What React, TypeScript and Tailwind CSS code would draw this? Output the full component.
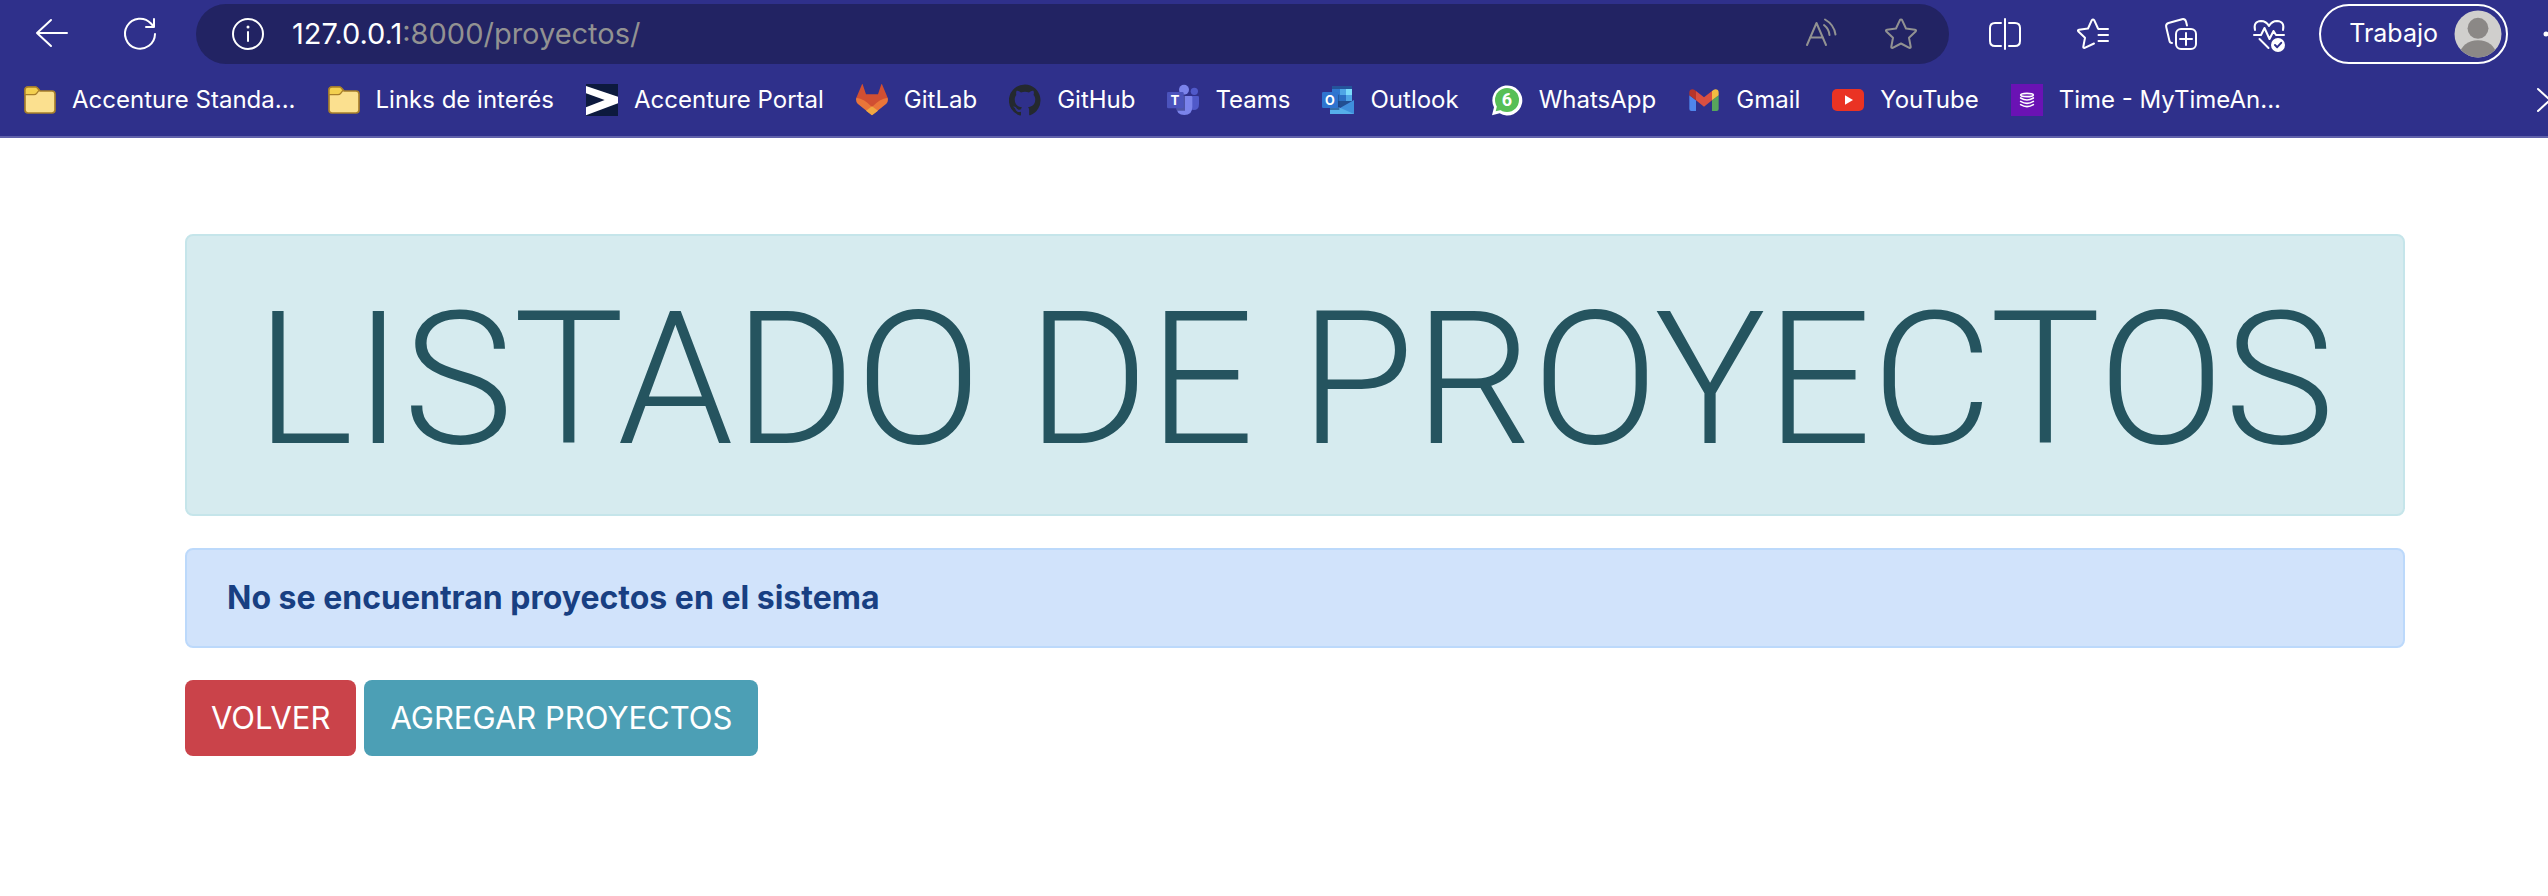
import type { ReactNode } from "react";

type IconProps = { children: ReactNode; className?: string };

/* Line icon on a 32px grid */
function Line({ children, className = "" }: IconProps) {
  return (
    <svg viewBox="0 0 32 32" aria-hidden="true" className={`size-8 shrink-0 overflow-visible ${className}`} fill="none" stroke="currentColor" strokeWidth="2" strokeLinecap="round" strokeLinejoin="round">
      {children}
    </svg>
  );
}

/* Favicon on a 96 unit grid */
function Fav({ children }: IconProps) {
  return (
    <svg viewBox="0 0 96 96" aria-hidden="true" className="size-8 shrink-0">
      {children}
    </svg>
  );
}

const folder = (
  <Fav>
    <path d="M3 18q0-9 9-9h22q4 0 7 4l7 8h36q9 0 9 9v48q0 9-9 9H12q-9 0-9-9z" fill="#fbe08f" stroke="#a87f2a" strokeWidth="5" />
    <path d="M3 18q0-9 9-9h22q4 0 7 4l4 6-7 9q-3 4-8 4H3z" fill="#f3d04f" stroke="#a87f2a" strokeWidth="4" />
  </Fav>
);

const accenture = (
  <Fav>
    <path d="M0 0h96v96H0z" fill="#0d1a3e" />
    <path d="M0 6v22l56 20L0 70v24l96-36V38z" fill="#fff" />
  </Fav>
);

const gitlab = (
  <Fav>
    <path d="M18 1q1-2 2 0l10 30h36L76 1q1-2 2 0l17 40-47 30L1 41z" fill="#d14f32" />
    <path d="M1 41q-3 11 4 18l43 35 43-35q7-7 4-18-24 3-47 28Q25 44 1 41z" fill="#ea7539" />
    <path d="M30 80l18-13 18 13-18 14z" fill="#f0a742" />
  </Fav>
);

const github = (
  <Fav>
    <g transform="scale(4)">
      <path fill="#24292e" d="M12 .3a12 12 0 0 0-3.8 23.4c.6.1.8-.3.8-.6v-2.2c-3.3.7-4-1.6-4-1.6-.6-1.4-1.4-1.8-1.4-1.8-1-.7.1-.7.1-.7 1.2.1 1.9 1.2 1.9 1.2 1 1.8 2.8 1.3 3.5 1 0-.8.4-1.3.7-1.6-2.7-.3-5.5-1.3-5.5-5.9 0-1.3.5-2.4 1.2-3.2 0-.4-.5-1.6.2-3.2 0 0 1-.3 3.3 1.2a11.5 11.5 0 0 1 6 0c2.3-1.5 3.3-1.2 3.3-1.2.7 1.6.2 2.8.1 3.2.8.8 1.3 1.9 1.3 3.2 0 4.6-2.8 5.6-5.5 5.9.5.4.9 1.1.9 2.2v3.3c0 .3.1.7.8.6A12 12 0 0 0 12 .3" />
    </g>
  </Fav>
);

const teams = (
  <Fav>
    <circle cx="82" cy="22" r="11" fill="#5059c9" />
    <path d="M66 36h26q4 0 4 4v20q0 18-16 18-10 0-14-6z" fill="#5059c9" />
    <circle cx="51" cy="17" r="15" fill="#7b83eb" />
    <path d="M28 36h44q4 0 4 4v28q0 25-24 25T28 68z" fill="#7b83eb" />
    <path d="M28 32h26v48H30l-2-8z" fill="#3b3f8c" opacity=".7" />
    <rect y="24" width="50" height="49" rx="4" fill="#4b53bc" />
    <text x="24" y="63" textAnchor="middle" fontSize="40" fontWeight="700" fontFamily="Inter, sans-serif" fill="#fff">T</text>
  </Fav>
);

const outlook = (
  <Fav>
    <path d="M30 6h60v12H30z" fill="#24549a" />
    <path d="M30 15h24v40H30z" fill="#2f78d0" />
    <path d="M54 15h18v18H54z" fill="#4fa5e6" />
    <path d="M72 15h18v18H72z" fill="#7bdbfb" />
    <path d="M54 33h18v18H54z" fill="#2c6fc4" />
    <path d="M72 33h18v18H72z" fill="#4fa5e6" />
    <path d="M30 51h60L60 70 30 62z" fill="#224f92" />
    <path d="M96 48v42H24V66l30 6z" fill="#3f8fdc" />
    <path d="M24 58l72 32H24z" fill="#56aeea" />
    <path d="M24 32h28v46H24z" fill="#1c447f" opacity=".6" />
    <rect y="24" width="48" height="48" rx="4" fill="#2f74cf" />
    <text x="24" y="62" textAnchor="middle" fontSize="38" fontWeight="700" fontFamily="Inter, sans-serif" fill="#fff">O</text>
  </Fav>
);

const whatsapp = (
  <Fav>
    <path d="M3 94l6-24A45 45 0 1 1 26 88z" fill="#fff" />
    <circle cx="48" cy="48" r="36" fill="#57bf56" />
    <path d="M14 82l5-20 15 15z" fill="#57bf56" />
    <text x="48" y="67" textAnchor="middle" fontSize="54" fontWeight="700" fontFamily="Roboto, sans-serif" fill="#fff">6</text>
  </Fav>
);

const gmail = (
  <Fav>
    <path d="M4 34l20 15v32H10q-6 0-6-6z" fill="#4f86ec" />
    <path d="M92 34L72 49v32h14q6 0 6-6z" fill="#57a65c" />
    <path d="M24 21l24 19 24-19v28L48 68 24 49z" fill="#da4f41" />
    <path d="M4 34v-8q0-10 10-10 4 0 10 5v28z" fill="#b7352b" />
    <path d="M92 34v-8q0-10-10-10-4 0-10 5v28z" fill="#f3bd42" />
  </Fav>
);

const youtube = (
  <Fav>
    <rect y="15" width="96" height="66" rx="15" fill="#ea3323" />
    <path d="M39 34l24 14-24 14z" fill="#fff" />
  </Fav>
);

const time = (
  <Fav>
    <path d="M0 0h96v96H0z" fill="#6a12b4" />
    <g fill="none" stroke="#fff" strokeWidth="5" strokeLinecap="round">
      <ellipse cx="48" cy="33" rx="19" ry="5" />
      <path d="M29 42q19 12 38 0M29 52q19 12 38 0M29 62q19 12 38 0" />
    </g>
  </Fav>
);

const bookmarks = [
  { icon: folder, label: "Accenture Standa..." },
  { icon: folder, label: "Links de interés" },
  { icon: accenture, label: "Accenture Portal" },
  { icon: gitlab, label: "GitLab" },
  { icon: github, label: "GitHub" },
  { icon: teams, label: "Teams" },
  { icon: outlook, label: "Outlook" },
  { icon: whatsapp, label: "WhatsApp" },
  { icon: gmail, label: "Gmail" },
  { icon: youtube, label: "YouTube" },
  { icon: time, label: "Time - MyTimeAn..." },
];

const star = "M16 1.5q.8 0 1.2.8l3.8 8.2 9 1.2q1.8.4.6 1.8l-6.6 6.2 1.7 9q.1 1.6-1.4 1.1L16 25.5l-8.3 4.3q-1.5.5-1.4-1.1l1.7-9L1.4 13.5q-1.2-1.4.6-1.8l9-1.2 3.8-8.2q.4-.8 1.2-.8z";

function BarButton({ label, children }: { label: string; children: ReactNode }) {
  return (
    <button type="button" aria-label={label} className="flex h-15 w-22 shrink-0 items-center justify-center">
      {children}
    </button>
  );
}

function BrowserHeader() {
  return (
    <header className="overflow-hidden border-b-2 border-[#6061aa] bg-[#2f308b] text-white">
      <div className="flex items-center pt-1 pl-2">
        <BarButton label="Atrás">
          <Line><path d="M31 15H1M15 2L1 15l14 13" /></Line>
        </BarButton>
        <BarButton label="Actualizar">
          <Line><path d="M31 16A15 15 0 1 1 27 5.5l3 3.5M30 1v8h-8" /></Line>
        </BarButton>
        <div className="mr-3 ml-3 flex h-15 min-w-0 flex-1 items-center rounded-full bg-[#222363] pl-9">
          <Line>
            <circle cx="16" cy="16" r="15" />
            <path d="M16 14v9" />
            <circle cx="16" cy="9" r="1.5" fill="currentColor" stroke="none" />
          </Line>
          <p className="ml-7 flex-1 text-[29px] whitespace-nowrap text-[#929292]">
            <span className="text-white">127.0.0.1</span>:8000/proyectos/
          </p>
          <div className="mr-2 flex text-[#929292]">
            <button type="button" aria-label="Leer en voz alta" className="flex h-15 w-20 items-center justify-center">
              <Line><path d="M2 27L11.5 5 21 27M5 19.5h13M19 7q5 4 5.5 10M20 1.5q9 5 10.5 15" /></Line>
            </button>
            <button type="button" aria-label="Agregar a favoritos" className="flex h-15 w-20 items-center justify-center">
              <Line><path d={star} /></Line>
            </button>
          </div>
        </div>
        <BarButton label="Pantalla dividida">
          <Line><path d="M16 1v30M12 5H6q-5 0-5 5v13q0 5 5 5h6M20 5h6q5 0 5 5v13q0 5-5 5h-6" /></Line>
        </BarButton>
        <BarButton label="Favoritos">
          <Line><path d="M21 10.5L17.3 2.3q-1.3-1.6-2.6 0L11 10.5l-9 1.2q-1.8.4-.6 1.8L8 19.7l-1.7 9q-.1 1.6 1.4 1.1L17 25.5M21.5 11H31M21.5 17H31M21.5 23H31" /></Line>
        </BarButton>
        <BarButton label="Colecciones">
          <Line>
            <rect x="11" y="11" width="20" height="20" rx="5" />
            <path d="M21 15v12M15 21h12M7 25q-2 0-2.5-2L1.2 9q-.7-3 2.3-4L17 1.2q3-.7 4 2.3l1 4" />
          </Line>
        </BarButton>
        <BarButton label="Estado del explorador">
          <Line>
            <path d="M2 12Q0 3.5 8 3q5 0 8 5 3-5 8-5 8 .5 6 9M1 17h7l3.5-7 5 11 4-8 2.5 4h8M6.5 21l9 9" />
            <circle cx="25" cy="27" r="7" fill="currentColor" stroke="none" />
            <path d="M22 27l2.2 2.2 4-4.4" stroke="#2f308b" />
          </Line>
        </BarButton>
        <button type="button" className="ml-1.5 flex h-15 shrink-0 items-center gap-4 rounded-full border-2 border-white pr-1 pl-7 text-[25px]">
          Trabajo
          <svg viewBox="0 0 46 46" aria-hidden="true" className="size-12">
            <defs><clipPath id="avatar"><circle cx="23" cy="23" r="22.5" /></clipPath></defs>
            <g clipPath="url(#avatar)">
              <path d="M0 0h46v46H0z" fill="#d0cfcd" />
              <circle cx="23" cy="17.5" r="10" fill="#8b8886" />
              <ellipse cx="23" cy="42" rx="17" ry="13" fill="#8b8886" />
            </g>
          </svg>
        </button>
        <button type="button" aria-label="Configuración y más" className="ml-8 w-2 shrink-0">
          <Line><g fill="currentColor" stroke="none"><circle cx="6" cy="16" r="2.5" /><circle cx="16" cy="16" r="2.5" /><circle cx="26" cy="16" r="2.5" /></g></Line>
        </button>
      </div>
      <nav aria-label="Favoritos" className="flex h-18 items-center gap-8 pl-6">
        {bookmarks.map((b) => (
          <a key={b.label} href="#" className="flex shrink-0 items-center gap-4 text-2xl whitespace-nowrap">
            {b.icon}
            {b.label}
          </a>
        ))}
        <button type="button" aria-label="Más favoritos" className="ml-auto w-3 shrink-0">
          <Line><path d="M2 5l12 11L2 27" /></Line>
        </button>
      </nav>
    </header>
  );
}

export default function App() {
  return (
    <div className="min-h-screen bg-white font-['Inter','Liberation_Sans',sans-serif]">
      <BrowserHeader />
      <main className="flex flex-col gap-8 pt-24 pr-[143px] pl-[185px]">
        <div className="rounded-lg border-2 border-[#c5e5ea] bg-[#d6ebef] pt-7 pb-5 text-center text-[#25545f]">
          <h1 className="font-['Roboto','Inter',sans-serif] text-[186px] leading-[230px] font-light whitespace-nowrap">LISTADO DE PROYECTOS</h1>
        </div>
        <div role="alert" className="rounded-lg border-2 border-[#bcd9fb] bg-[#d1e3fb] px-10 py-6 text-[32px] leading-12 font-bold text-[#183f82]">
          No se encuentran proyectos en el sistema
        </div>
        <div className="flex gap-2 text-[31px] leading-12 text-white">
          <a href="#" className="rounded-lg bg-[#ca434a] px-[26px] py-3.5">VOLVER</a>
          <a href="#" className="rounded-lg bg-[#4c9fb5] px-[26px] py-3.5">AGREGAR PROYECTOS</a>
        </div>
      </main>
    </div>
  );
}
